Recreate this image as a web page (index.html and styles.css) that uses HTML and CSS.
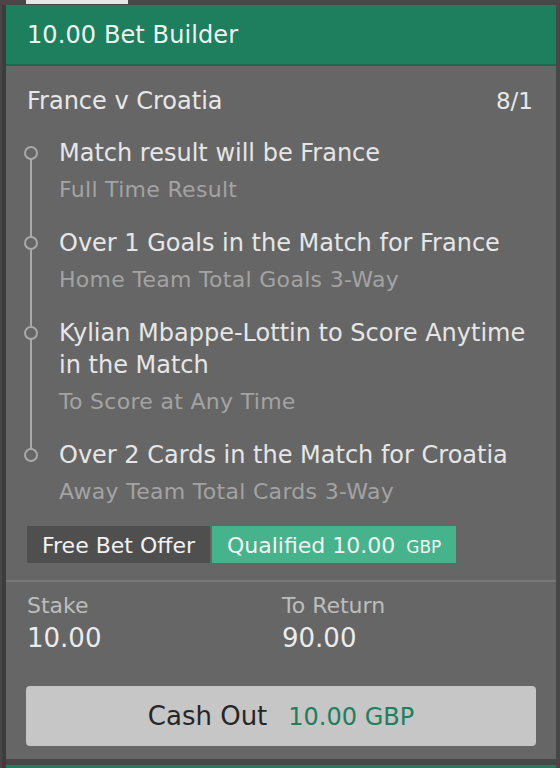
FILE: index.html
```html
<!DOCTYPE html>
<html lang="en">
<head>
<meta charset="utf-8">
<title>Bet Builder</title>
<link rel="stylesheet" href="styles.css">
</head>
<body>
<div class="page">
  <div class="topbar"><div class="tab"></div></div>
  <div class="frame">
    <section class="card">
      <header class="card-head">10.00 Bet Builder</header>
      <div class="card-body">
        <div class="match">
          <span class="match-name">France v Croatia</span>
          <span class="odds">8/1</span>
        </div>
        <ul class="legs">
          <li class="leg">
            <span class="dot"></span>
            <div class="leg-title">Match result will be France</div>
            <div class="leg-sub">Full Time Result</div>
          </li>
          <li class="leg">
            <span class="dot"></span>
            <div class="leg-title">Over 1 Goals in the Match for France</div>
            <div class="leg-sub">Home Team Total Goals 3-Way</div>
          </li>
          <li class="leg">
            <span class="dot"></span>
            <div class="leg-title">Kylian Mbappe-Lottin to Score Anytime in the Match</div>
            <div class="leg-sub">To Score at Any Time</div>
          </li>
          <li class="leg">
            <span class="dot"></span>
            <div class="leg-title">Over 2 Cards in the Match for Croatia</div>
            <div class="leg-sub">Away Team Total Cards 3-Way</div>
          </li>
        </ul>
        <div class="offer">
          <span class="offer-label">Free Bet Offer</span>
          <span class="offer-status">Qualified 10.00 <span class="ccy">GBP</span></span>
        </div>
      </div>
      <div class="returns">
        <div class="ret-col">
          <div class="ret-label">Stake</div>
          <div class="ret-value">10.00</div>
        </div>
        <div class="ret-col">
          <div class="ret-label">To Return</div>
          <div class="ret-value">90.00</div>
        </div>
      </div>
      <div class="cashout-wrap">
        <button class="cashout"><span class="co-label">Cash Out</span><span class="co-amount">10.00 GBP</span></button>
      </div>
    </section>
    <div class="next-card"></div>
  </div>
</div>
</body>
</html>
```

FILE: styles.css
```css
* { box-sizing: border-box; }

html, body {
  margin: 0;
  padding: 0;
}

body {
  background: #474747;
  font-family: "DejaVu Sans", Verdana, sans-serif;
  width: 560px;
  height: 768px;
  overflow: hidden;
}

.page {
  width: 560px;
  height: 768px;
}

.topbar {
  height: 5px;
  padding-left: 26px;
}

.tab {
  width: 102px;
  height: 4px;
  background: #e6e6e6;
}

.frame {
  margin-left: 2px;
  border-left: 4px solid #3c3c3c;
  margin-right: 4px;
  height: 763px;
  display: flex;
  flex-direction: column;
}

.card {
  background: #666666;
}

.card-head {
  height: 61px;
  padding: 2px 0 0 21px;
  line-height: 57px;
  background: #1e7f5f;
  border-bottom: 2px solid #17694f;
  color: #edf4f0;
  font-size: 24px;
  letter-spacing: 0.1px;
}

.card-body {
  padding: 19px 22px 17px 21px;
}

.match {
  display: flex;
  justify-content: space-between;
  line-height: 32px;
  font-size: 24px;
  color: #e8e8e8;
  margin-bottom: 20px;
}

.odds {
  font-size: 23px;
  padding-right: 1px;
}

.legs {
  list-style: none;
  margin: 0;
  padding: 0;
  position: relative;
}

.legs::before {
  content: "";
  position: absolute;
  left: 3px;
  width: 2px;
  top: 16px;
  bottom: 53px;
  background: #a9a9a9;
}

.leg {
  position: relative;
  padding-left: 32px;
  margin-bottom: 21px;
}

.leg:last-child {
  margin-bottom: 0;
}

.dot {
  position: absolute;
  left: -3px;
  top: 9px;
  width: 14px;
  height: 14px;
  border: 2px solid #a9a9a9;
  border-radius: 50%;
  background: #666666;
  z-index: 1;
}

.leg-title {
  font-size: 24px;
  line-height: 32px;
  color: #e6e6e6;
}

.leg-sub {
  margin-top: 5px;
  font-size: 22px;
  letter-spacing: 0.3px;
  line-height: 32px;
  color: #a3a3a3;
}

.offer {
  margin-top: 18px;
  display: flex;
  gap: 2px;
  font-size: 22px;
  color: #f2f2f2;
}

.offer-label,
.offer-status {
  height: 37px;
  padding-top: 2px;
  line-height: 35px;
}

.offer-label {
  background: #4f4f4f;
  padding-left: 15px;
  padding-right: 15px;
}

.offer-status {
  background: #46b38c;
  padding-left: 15px;
  padding-right: 15px;
}

.ccy {
  font-size: 17px;
  margin-left: 4px;
}

.returns {
  border-top: 2px solid #777777;
  padding: 11px 22px 0 21px;
  display: grid;
  grid-template-columns: 255px 1fr;
}

.ret-label {
  font-size: 22px;
  line-height: 26px;
  color: #bdbdbd;
}

.ret-value {
  margin-top: 3px;
  font-size: 26px;
  line-height: 32px;
  color: #ececec;
}

.cashout-wrap {
  padding: 32px 20px 13px 20px;
}

.cashout {
  display: flex;
  justify-content: center;
  align-items: baseline;
  gap: 21px;
  width: 100%;
  height: 60px;
  border: none;
  border-radius: 4px;
  background: #c6c6c6;
  font-family: "DejaVu Sans", Verdana, sans-serif;
  line-height: 60px;
  padding: 0 0 0 0;
}

.co-label {
  font-size: 26px;
  color: #262626;
}

.co-amount {
  font-size: 24px;
  color: #1f7f5f;
}

.next-card {
  margin-top: 6px;
  flex: 1;
  background: #1e7f5f;
}
```
